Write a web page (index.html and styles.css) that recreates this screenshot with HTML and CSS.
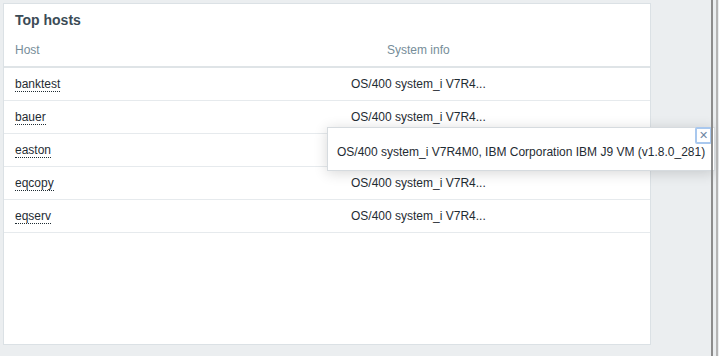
FILE: index.html
```html
<!DOCTYPE html>
<html lang="en">
<head>
    <meta charset="UTF-8">
    <meta name="viewport" content="width=device-width, initial-scale=1.0">
    <title>Top hosts</title>
    <link rel="stylesheet" href="styles.css">
</head>
<body>
    <div class="dashboard">
        <div class="widget">
            <div class="widget-head">
                <h4>Top hosts</h4>
            </div>
            <table class="list-table">
                <thead>
                    <tr>
                        <th class="col-host">Host</th>
                        <th class="col-info">System info</th>
                    </tr>
                </thead>
                <tbody>
                    <tr>
                        <td><a class="link-action" href="javascript:;">banktest</a></td>
                        <td>OS/400 system_i V7R4...</td>
                    </tr>
                    <tr>
                        <td><a class="link-action" href="javascript:;">bauer</a></td>
                        <td>OS/400 system_i V7R4...</td>
                    </tr>
                    <tr>
                        <td><a class="link-action" href="javascript:;">easton</a></td>
                        <td>OS/400 system_i V7R4...</td>
                    </tr>
                    <tr>
                        <td><a class="link-action" href="javascript:;">eqcopy</a></td>
                        <td>OS/400 system_i V7R4...</td>
                    </tr>
                    <tr>
                        <td><a class="link-action" href="javascript:;">eqserv</a></td>
                        <td>OS/400 system_i V7R4...</td>
                    </tr>
                </tbody>
            </table>
        </div>
    </div>
    <!-- 右侧的分隔线 -->
    <div class="edge">
        <span class="bar dark"></span>
        <span class="bar light"></span>
    </div>

    <!-- 悬浮提示框 -->
    <div class="hintbox">
        OS/400 system_i V7R4M0, IBM Corporation IBM J9 VM (v1.8.0_281)
        <button class="btn-close" type="button" title="Close">&#x2715;</button>
    </div>
</body>
</html>
```

FILE: styles.css
```css
* {
    box-sizing: border-box;
}
body {
    margin: 0;
    padding: 0;
    height: 356px;
    overflow: hidden;
    display: flex;
    background-color: #ebeef0;
    font-family: "Liberation Sans", Arial, sans-serif;
    font-size: 12px;
    color: #1f2c33;
}
.dashboard {
    width: 711px;
    padding: 3px;
}
.widget {
    width: 648px;
    height: 342px;
    background-color: #ffffff;
    border: 1px solid #dbe1e5;
}
.widget-head {
    padding: 7px 11px 0;
}
.widget-head h4 {
    margin: 0;
    font-size: 14px;
    line-height: 18px;
    font-weight: bold;
    color: #3b4b56;
}
.list-table {
    width: 100%;
    border-collapse: collapse;
}
.list-table th {
    padding: 13px 11px 8px;
    line-height: 16px;
    font-weight: normal;
    text-align: left;
    color: #768d99;
    border-bottom: 2px solid #dfe4e7;
}
.list-table th.col-host {
    width: 347px;
}
/* 表头居中在列的上方 */
.list-table th.col-info {
    padding-left: 36px;
}
.list-table td {
    padding: 8px 11px;
    line-height: 16px;
    white-space: nowrap;
    border-bottom: 1px solid #e6eaed;
}
.list-table td + td {
    padding-left: 0;
}
.link-action {
    color: #1f2c33;
    text-decoration: none;
    border-bottom: 1px dotted #1f2c33;
}
.edge {
    position: relative;
    z-index: 2;
    display: flex;
    width: 8px;
}
.edge .bar {
    display: block;
    width: 2px;
    height: 100%;
}
.edge .dark {
    background-color: #8c8c8c;
}
.edge .light {
    margin-left: 3px;
    background-color: #b4b4b4;
}
.hintbox {
    position: absolute;
    left: 327px;
    top: 127px;
    width: 388px;
    height: 44px;
    padding: 16px 8px 10px 9px;
    line-height: 16px;
    white-space: nowrap;
    background-color: #ffffff;
    border: 1px solid #d6dbdf;
    box-shadow: 0 2px 14px rgba(0, 0, 0, 0.16);
    color: #1f2c33;
}
.btn-close {
    position: absolute;
    top: -1px;
    right: 2px;
    width: 17px;
    height: 17px;
    padding: 0;
    font-size: 11px;
    line-height: 13px;
    color: #6d86a3;
    background-color: #ffffff;
    border: 2px solid #a9c8ee;
    border-radius: 2px;
    font-family: "DejaVu Sans", sans-serif;
}
```
